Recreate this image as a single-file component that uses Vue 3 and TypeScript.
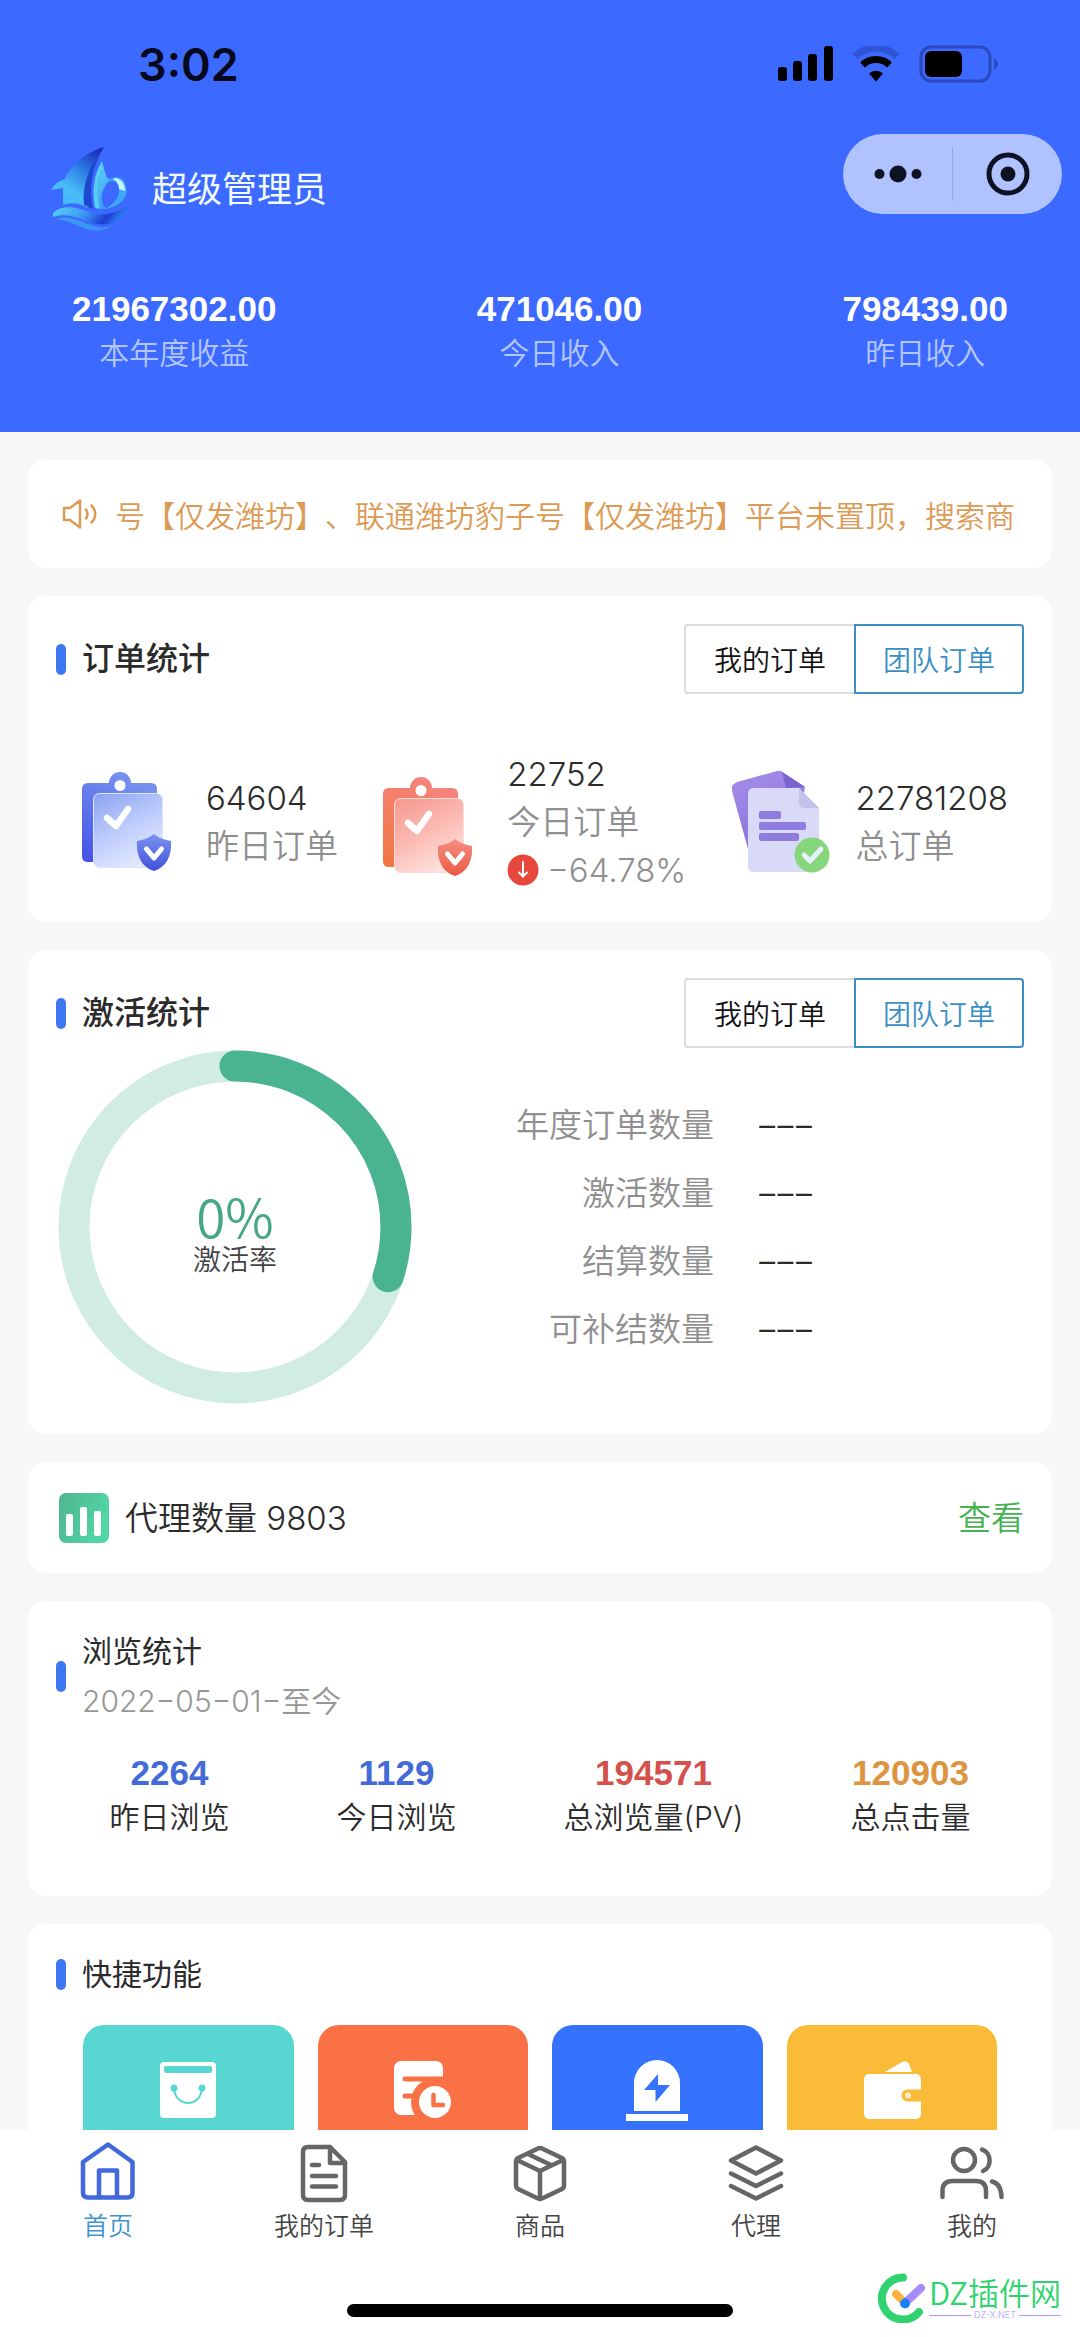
<script setup lang="ts">
import { ref } from 'vue'

interface Stat {
  label: string
  value: string
  tone?: string
}

const income: Stat[] = [
  { value: '21967302.00', label: '本年度收益' },
  { value: '471046.00', label: '今日收入' },
  { value: '798439.00', label: '昨日收入' },
]

const notice = '号【仅发潍坊】、联通潍坊豹子号【仅发潍坊】平台未置顶，搜索商'

const scopes: string[] = ['我的订单', '团队订单']
const orderScope = ref(1)
const activationScope = ref(1)

const activation: Stat[] = [
  { label: '年度订单数量', value: '−−−' },
  { label: '激活数量', value: '−−−' },
  { label: '结算数量', value: '−−−' },
  { label: '可补结数量', value: '−−−' },
]

const views: Stat[] = [
  { value: '2264', label: '昨日浏览', tone: 'blue' },
  { value: '1129', label: '今日浏览', tone: 'blue' },
  { value: '194571', label: '总浏览量(PV)', tone: 'red' },
  { value: '120903', label: '总点击量', tone: 'orange' },
]
</script>

<template>
  <div class="app">
    <header class="hero">
      <div class="status">
        <span class="clock">3:02</span>
        <div class="signals">
          <svg width="55" height="36" viewBox="0 0 55 36">
            <rect x="0" y="21" width="9" height="14" rx="3" />
            <rect x="15" y="15" width="9" height="20" rx="3" />
            <rect x="30" y="8" width="9" height="27" rx="3" />
            <rect x="46" y="0" width="9" height="35" rx="3" />
          </svg>
          <svg width="48" height="36" viewBox="0 0 48 36" fill="none">
            <path d="M3 10.500a30 30 0 0 1 42 0" stroke="#2f55d6" stroke-width="7" />
            <path d="M10.500 19a19.500 19.500 0 0 1 27 0" stroke="#000" stroke-width="7" />
            <path d="M17 27.500a10 10 0 0 1 14 0L24 35.500z" fill="#000" />
          </svg>
          <svg width="80" height="38" viewBox="0 0 80 38">
            <rect x="2" y="2" width="69" height="34" rx="10" fill="none" stroke="#2b49bb" stroke-width="3" />
            <rect x="6" y="6" width="37" height="26" rx="6" />
            <path d="M75 13c5 2 5 10 0 12z" fill="#2b49bb" />
          </svg>
        </div>
      </div>

      <div class="topline">
        <div class="brand">
          <svg class="logo" width="80" height="84" viewBox="0 0 80 84">
            <defs>
              <linearGradient id="sail" x1="0.9" y1="0" x2="0.3" y2="1">
                <stop offset="0" stop-color="#1b22b8" />
                <stop offset="0.4" stop-color="#2c7be4" />
                <stop offset="0.75" stop-color="#49bdf8" />
                <stop offset="1" stop-color="#45b8fb" />
              </linearGradient>
              <linearGradient id="jib" x1="0" y1="0" x2="0.4" y2="1">
                <stop offset="0" stop-color="#5ad2f5" />
                <stop offset="1" stop-color="#3b9cf6" />
              </linearGradient>
              <linearGradient id="wave" x1="0" y1="0" x2="1" y2="0.2">
                <stop offset="0" stop-color="#56d4f6" />
                <stop offset="0.5" stop-color="#3a93f4" />
                <stop offset="0.8" stop-color="#1c3fd2" />
                <stop offset="1" stop-color="#2f80f0" />
              </linearGradient>
            </defs>
            <path d="M53 0C36 5 20 17 14 32C8 34 3 37 0 43L12 41V58C21 55 29 56 37 61C34 40 42 17 53 0Z" fill="url(#sail)" />
            <path d="M52 2C38 18 31 38 33 58L42 62C38 40 40 22 52 2Z" fill="#1d48d0" />
            <path d="M51 14C42 28 41 46 44 61L50 62C45 48 46 30 53 22Z" fill="#57cdf6" />
            <path d="M53 22L56 31C62 31 55 36 52 44C49 52 51 58 56 62L49 62C45 48 46 32 53 22Z" fill="url(#jib)" />
            <path d="M56 36C60 29 70 28 74 36C80 49 69 60 54 62C64 56 71 48 67 38C65 33 60 33 56 36Z" fill="#3fa9f8" />
            <path d="M64 31C69 31 74 36 74 44L68 42C68 38 66 34 62 32Z" fill="#c4f5fb" />
            <path d="M2 66C12 57 26 60 38 65C52 70 64 66 77 60C72 74 60 79 46 77C32 75 20 64 2 70Z" fill="url(#wave)" />
            <path d="M4 72C20 67 30 75 42 79C49 81 58 81 63 78C52 86 38 84 30 80C20 76 12 72 4 72Z" fill="#3a97f6" />
          </svg>
          <h1>超级管理员</h1>
        </div>
        <div class="capsule">
          <button type="button" aria-label="更多">
            <svg width="48" height="18" viewBox="0 0 48 18">
              <circle cx="5.500" cy="9" r="5" /><circle cx="24" cy="9" r="8.500" /><circle cx="42.500" cy="9" r="5" />
            </svg>
          </button>
          <button type="button" aria-label="关闭">
            <svg width="44" height="44" viewBox="0 0 44 44">
              <circle cx="22" cy="22" r="19" fill="none" stroke="#0d1324" stroke-width="5" /><circle cx="22" cy="22" r="7.500" />
            </svg>
          </button>
        </div>
      </div>

      <div class="income">
        <div v-for="item in income" :key="item.label">
          <strong>{{ item.value }}</strong>
          <span>{{ item.label }}</span>
        </div>
      </div>
    </header>

    <main>
      <section class="card notice">
        <svg width="36" height="32" viewBox="0 0 36 32" fill="none" stroke="#dc9a55" stroke-width="2.500" stroke-linejoin="round" stroke-linecap="round">
          <path d="M2 10h6L18 2.500v27L8 22H2z" />
          <path d="M24 11.500c2 3 2 6 0 9M29.500 7.500c5 5 5 12 0 17" />
        </svg>
        <p>{{ notice }}</p>
      </section>

      <section class="card orders">
        <div class="card-head">
          <h2 class="strong">订单统计</h2>
          <div class="segment">
            <button v-for="(name, i) in scopes" :key="name" type="button" :class="{ on: orderScope === i }" @click="orderScope = i">{{ name }}</button>
          </div>
        </div>
        <div class="order-row">
          <div class="order">
            <svg width="98" height="100" viewBox="0 0 98 100">
              <defs>
                <linearGradient id="bBack" x1="0.4" y1="0" x2="0" y2="1"><stop offset="0" stop-color="#7590ee" /><stop offset="1" stop-color="#4450e6" /></linearGradient>
                <linearGradient id="bFront" x1="0.1" y1="0" x2="0.6" y2="1"><stop offset="0" stop-color="#8fa5f2" /><stop offset="0.5" stop-color="#bccbfc" /><stop offset="1" stop-color="#e3e9ff" /></linearGradient>
                <linearGradient id="bShield" x1="0" y1="0" x2="0" y2="1"><stop offset="0" stop-color="#7c93ee" /><stop offset="1" stop-color="#3f51dd" /></linearGradient>
              </defs>
              <path d="M6 11H27a11 11 0 0 1 22 0H69q6 0 6 6V90H6q-6 0-6-6V17q0-6 6-6Z" fill="url(#bBack)" />
              <circle cx="38" cy="13.500" r="5.500" fill="#fff" />
              <rect x="11.500" y="21.500" width="69" height="74" rx="6" fill="url(#bFront)" stroke="#dfe6ff" />
              <path d="M25 46l9 8 12-17" fill="none" stroke="#fff" stroke-width="6.500" stroke-linecap="round" stroke-linejoin="round" />
              <path d="M72 62C77 66 83 68 89 69C90 83 85 95 72 99C59 95 54 83 55 69C61 68 67 66 72 62Z" fill="url(#bShield)" />
              <path d="M64.500 77l7.500 9 7.500-9" fill="none" stroke="#fff" stroke-width="5" stroke-linecap="round" stroke-linejoin="round" />
            </svg>
            <div class="order-text"><b>64604</b><span>昨日订单</span></div>
          </div>
          <div class="order">
            <svg width="98" height="110" viewBox="0 -10 98 110">
              <defs>
                <linearGradient id="rBack" x1="0.4" y1="0" x2="0" y2="1"><stop offset="0" stop-color="#f5837a" /><stop offset="1" stop-color="#f0763f" /></linearGradient>
                <linearGradient id="rFront" x1="0.1" y1="0" x2="0.6" y2="1"><stop offset="0" stop-color="#f69a90" /><stop offset="0.5" stop-color="#fbb9b2" /><stop offset="1" stop-color="#ffe2dd" /></linearGradient>
                <linearGradient id="rShield" x1="0" y1="0" x2="0" y2="1"><stop offset="0" stop-color="#f78d84" /><stop offset="1" stop-color="#ea5a44" /></linearGradient>
              </defs>
              <path d="M6 11H27a11 11 0 0 1 22 0H69q6 0 6 6V90H6q-6 0-6-6V17q0-6 6-6Z" fill="url(#rBack)" />
              <circle cx="38" cy="13.500" r="5.500" fill="#fff" />
              <rect x="11.500" y="21.500" width="69" height="74" rx="6" fill="url(#rFront)" stroke="#ffdcd7" />
              <path d="M25 46l9 8 12-17" fill="none" stroke="#fff" stroke-width="6.500" stroke-linecap="round" stroke-linejoin="round" />
              <path d="M72 62C77 66 83 68 89 69C90 83 85 95 72 99C59 95 54 83 55 69C61 68 67 66 72 62Z" fill="url(#rShield)" />
              <path d="M64.500 77l7.500 9 7.500-9" fill="none" stroke="#fff" stroke-width="5" stroke-linecap="round" stroke-linejoin="round" />
            </svg>
            <div class="order-text">
              <b>22752</b>
              <span>今日订单</span>
              <span class="trend">
                <svg width="32" height="32" viewBox="0 0 32 32">
                  <circle cx="16" cy="16" r="15.500" fill="#e8483b" />
                  <path d="M16 8v14M12 18.500l4 4 4-4" fill="none" stroke="#fff" stroke-width="2" stroke-linecap="round" />
                </svg>
                −64.78%
              </span>
            </div>
          </div>
          <div class="order">
            <svg width="98" height="104" viewBox="0 0 98 104">
              <defs>
                <linearGradient id="pBack" x1="0" y1="0" x2="0.3" y2="1"><stop offset="0" stop-color="#a58de8" /><stop offset="1" stop-color="#8672dc" /></linearGradient>
              </defs>
              <path d="M5 12L45 1Q49 0 52 3L73 17L60 92L16 79L0 21Q-2 15 5 12Z" fill="url(#pBack)" />
              <path d="M50 2L54 18L73 17Z" fill="#7a62cf" />
              <path d="M22 18H67L87 38V96Q87 102 81 102H22Q16 102 16 96V24Q16 18 22 18Z" fill="#d8daf8" />
              <path d="M67 18V32Q67 38 73 38H87Z" fill="#c3c3ea" />
              <rect x="27" y="41" width="22" height="8" rx="2" fill="#8f7ce0" />
              <rect x="27" y="52" width="47" height="8" rx="2" fill="#8f7ce0" />
              <rect x="27" y="63" width="40" height="8" rx="2" fill="#8f7ce0" />
              <circle cx="80" cy="85" r="17.500" fill="#86d67c" />
              <path d="M72 85l6 6 11-12" fill="none" stroke="#e8f0fb" stroke-width="5" stroke-linecap="round" stroke-linejoin="round" />
            </svg>
            <div class="order-text"><b>22781208</b><span>总订单</span></div>
          </div>
        </div>
      </section>

      <section class="card activation">
        <div class="card-head">
          <h2 class="strong">激活统计</h2>
          <div class="segment">
            <button v-for="(name, i) in scopes" :key="name" type="button" :class="{ on: activationScope === i }" @click="activationScope = i">{{ name }}</button>
          </div>
        </div>
        <div class="activation-row">
          <div class="gauge">
            <svg width="354" height="354" viewBox="0 0 354 354" fill="none" stroke-width="31">
              <circle cx="177" cy="177" r="161" stroke="#d0ece4" />
              <circle cx="177" cy="177" r="161" stroke="#49b392" stroke-linecap="round" pathLength="100" stroke-dasharray="30 100" transform="rotate(-90 177 177)" />
            </svg>
            <div class="gauge-text"><b>0%</b><span>激活率</span></div>
          </div>
          <dl>
            <div v-for="item in activation" :key="item.label">
              <dt>{{ item.label }}</dt>
              <dd>{{ item.value }}</dd>
            </div>
          </dl>
        </div>
      </section>

      <section class="card agents">
        <svg width="50" height="50" viewBox="0 0 50 50">
          <defs>
            <linearGradient id="chart" x1="0" y1="0" x2="1" y2="0.4"><stop offset="0" stop-color="#4fb48f" /><stop offset="1" stop-color="#52d6a4" /></linearGradient>
          </defs>
          <rect width="50" height="50" rx="7" fill="url(#chart)" />
          <g fill="#fff"><rect x="7" y="21" width="7" height="22" rx="2" /><rect x="21" y="14" width="7" height="29" rx="2" /><rect x="35" y="18" width="7" height="25" rx="2" /></g>
        </svg>
        <span>代理数量 9803</span>
        <a href="#agents">查看</a>
      </section>

      <section class="card views">
        <div class="card-head">
          <div class="titled">
            <h2>浏览统计</h2>
            <p>2022−05−01−至今</p>
          </div>
        </div>
        <div class="views-row">
          <div v-for="item in views" :key="item.label">
            <strong :class="item.tone">{{ item.value }}</strong>
            <span>{{ item.label }}</span>
          </div>
        </div>
      </section>

      <section class="card quick">
        <div class="card-head"><h2>快捷功能</h2></div>
        <div class="tiles">
          <a href="#shop" class="tile teal" aria-label="商城">
            <svg width="60" height="62" viewBox="0 0 60 62">
              <rect x="2" y="2" width="56" height="56" rx="4" fill="#fff" />
              <rect x="6" y="6" width="48" height="7" rx="2" fill="#57d6d2" />
              <g fill="#57d6d2"><circle cx="16" cy="28" r="3.500" /><circle cx="44" cy="28" r="3.500" /></g>
              <path d="M16 28c1 20 27 20 28 0" fill="none" stroke="#57d6d2" stroke-width="2" />
            </svg>
          </a>
          <a href="#history" class="tile coral" aria-label="订单记录">
            <svg width="60" height="62" viewBox="0 0 60 62">
              <rect x="1" y="1" width="49" height="54" rx="7" fill="#fff" />
              <path d="M12 19H52M12 36H20" stroke="#fa7145" stroke-width="5" stroke-linecap="round" />
              <circle cx="42" cy="42" r="24" fill="#fa7145" />
              <circle cx="42" cy="42" r="16" fill="#fff" />
              <path d="M40.500 35v10H50" fill="none" stroke="#fa7145" stroke-width="4.500" stroke-linecap="round" stroke-linejoin="round" />
            </svg>
          </a>
          <a href="#alerts" class="tile azure" aria-label="预警">
            <svg width="62" height="62" viewBox="-1 0 62 62">
              <path d="M7 51V23a23 23 0 0 1 46 0V51Z" fill="#fff" />
              <rect x="-1" y="54" width="62" height="7" fill="#fff" />
              <path d="M31 14L17 30H28.500V42L43 25H31Z" fill="#3573fe" />
            </svg>
          </a>
          <a href="#wallet" class="tile amber" aria-label="钱包">
            <svg width="60" height="62" viewBox="0 0 60 62">
              <path d="M23 12L40 2Q45 0 47 4L50 12Z" fill="#fff" />
              <rect x="2" y="14" width="57" height="45" rx="5" fill="#fff" />
              <path d="M60 30.500H45.500a5 5 0 0 0 0 10H60" fill="#f9bb38" stroke="#f9bb38" stroke-width="2" />
              <circle cx="46" cy="35.500" r="3" fill="#fff0cc" />
            </svg>
          </a>
        </div>
      </section>
    </main>

    <footer>
      <nav>
        <a href="#home" class="current">
          <svg class="tab-icon" width="64" height="62" viewBox="0 0 64 62">
            <path d="M32 2.500L56.500 20V50.500q0 5-5 5H12q-5 0-5-5V20Z" /><path d="M23 55V28.500H41V55" />
          </svg>
          <span>首页</span>
        </a>
        <a href="#orders">
          <svg class="tab-icon" width="64" height="62" viewBox="0 0 64 62">
            <path d="M38 5H16q-5 0-5 5V53q0 5 5 5H48q5 0 5-5V20Z" /><path d="M38 5V21H53M20 23H27M20 34H44M20 44.500H44" />
          </svg>
          <span>我的订单</span>
        </a>
        <a href="#goods">
          <svg class="tab-icon" width="64" height="62" viewBox="0 0 64 62">
            <path d="M29 7Q32 5 35 7L54 16Q56 17 56 20V43Q56 46 54 47L35 56Q32 58 29 56L10 47Q8 46 8 43V20Q8 17 10 16Z" />
            <path d="M9 18L32 29L55 18M32 29V57M20 12L43 23" />
          </svg>
          <span>商品</span>
        </a>
        <a href="#agent">
          <svg class="tab-icon" width="64" height="62" viewBox="0 0 64 62">
            <path d="M32 5.500L57 18.500L32 31.500L7 18.500Z" /><path d="M7 31.500L32 44L57 31.500M7 44L32 56.500L57 44" />
          </svg>
          <span>代理</span>
        </a>
        <a href="#mine">
          <svg class="tab-icon" width="64" height="62" viewBox="0 0 64 62">
            <circle cx="24" cy="18" r="11" />
            <path d="M42 7.500c10 3 10 18 1 21.500M2.500 55V49q0-10 10-10H36q10 0 10 10V55M52 39.500q9 2 9.500 15.500" />
          </svg>
          <span>我的</span>
        </a>
      </nav>
      <div class="home-bar"></div>
      <div class="watermark">
        <svg width="48" height="50" viewBox="0 0 48 50" fill="none" stroke-linecap="round">
          <path d="M25 4.500A21 21 0 1 0 41 39" stroke="#2fd470" stroke-width="8" />
          <path d="M18 21l9 9" stroke="#ffb13d" stroke-width="8" />
          <path d="M43 15L27 30" stroke="#a78bfa" stroke-width="8" />
          <circle cx="27" cy="30.500" r="5" fill="#1683f5" />
        </svg>
        <div>
          <b>DZ插件网</b>
          <small>DZ-X.NET</small>
        </div>
      </div>
    </footer>
  </div>
</template>

<style>
body {
  margin: 0;
  background: #fff;
}
</style>

<style scoped>
.app {
  display: flex;
  flex-direction: column;
  height: 100vh;
  overflow: hidden;
  background: #f7f7f7;
  color: #2b2b2b;
  font-family: "Inter", "Noto Sans CJK SC", sans-serif;
  font-weight: 350;
}
h1, h2, p, dl, dd {
  margin: 0;
  font-weight: inherit;
}
svg {
  display: block;
  flex: none;
}
a {
  color: inherit;
  text-decoration: none;
}
button {
  padding: 0;
  border: 0;
  background: none;
  font: inherit;
  color: inherit;
}

.hero {
  flex: none;
  background: #3c69ff;
  padding-bottom: 57px;
}
.status {
  display: flex;
  align-items: center;
  justify-content: space-between;
  height: 128px;
  padding: 0 81px 0 138px;
}
.clock {
  color: #06091c;
  font-size: 45px;
  font-weight: 600;
}
.signals {
  display: flex;
  align-items: center;
  gap: 19px;
}
.topline {
  display: flex;
  align-items: flex-start;
  justify-content: space-between;
  padding: 6px 18px 0 51px;
}
.brand {
  display: flex;
  align-items: center;
  gap: 21px;
  padding-top: 13px;
}
.brand h1 {
  color: #f2fbff;
  font-size: 35px;
  line-height: 48px;
  font-weight: 400;
}
.capsule {
  display: flex;
  align-items: center;
  height: 80px;
  width: 219px;
  border-radius: 40px;
  background: #b1c3ff;
}
.capsule button {
  display: flex;
  flex: 1;
  align-items: center;
  justify-content: center;
  height: 54px;
}
.capsule button + button {
  border-left: 1px solid #95a9ee;
}
.capsule circle {
  fill: #0d1324;
}
.capsule circle[fill="none"] {
  fill: none;
}
.income {
  display: flex;
  justify-content: space-between;
  padding: 0 72px;
  margin-top: 56px;
  text-align: center;
}
.income strong,
.income span,
.views-row strong,
.views-row span {
  display: block;
  line-height: 44px;
}
.income strong,
.views-row strong {
  font-family: "Liberation Sans", sans-serif;
  font-size: 35px;
  font-weight: 700;
}
.income strong {
  color: #fff;
}
.income span {
  color: #b3c6ff;
  font-size: 30px;
}

main {
  display: flex;
  flex: 1;
  flex-direction: column;
  gap: 28px;
  min-height: 0;
  overflow: hidden;
  padding: 28px 28px 0;
}
.card {
  flex: none;
  border-radius: 18px;
  background: #fff;
}
.notice {
  display: flex;
  align-items: center;
  gap: 17px;
  height: 108px;
  padding: 0 28px 0 34px;
  overflow: hidden;
  color: #dc9a55;
}
.notice p {
  font-size: 30px;
  line-height: 44px;
  white-space: nowrap;
  font-family: "Noto Sans CJK SC", sans-serif;
  text-spacing-trim: space-all;
}
.card-head {
  display: flex;
  align-items: center;
  padding: 0 28px;
}
.card-head::before {
  content: "";
  width: 10px;
  height: 31px;
  margin-right: 16px;
  border-radius: 5px;
  background: #3d78f2;
}
.card-head h2 {
  font-size: 30px;
  line-height: 50px;
  font-weight: 400;
}
.card-head h2.strong {
  font-size: 32px;
  font-weight: 500;
}
.segment {
  display: flex;
  margin-left: auto;
}
.segment button {
  box-sizing: border-box;
  width: 170px;
  height: 70px;
  border: 2px solid #dcdcdc;
  color: #111;
  font-size: 28px;
}
.segment button:first-child {
  border-right: 0;
  border-radius: 4px 0 0 4px;
}
.segment button:last-child {
  border-radius: 0 4px 4px 0;
}
.segment button.on {
  border: 2px solid #3b8fc4;
  color: #3b8fc4;
}

.orders,
.activation {
  padding-top: 28px;
}
.order-row {
  display: flex;
  align-items: center;
  justify-content: space-between;
  padding: 56px 44px 28px 54px;
}
.order {
  display: flex;
  align-items: center;
  gap: 26px;
}
.order-text {
  display: flex;
  flex-direction: column;
  font-size: 33px;
  line-height: 48px;
  color: #8f8f8f;
}
.order-text b {
  color: #2b2b2b;
  font-weight: inherit;
}
.trend {
  display: flex;
  align-items: center;
  gap: 8px;
}

.activation-row {
  display: flex;
  align-items: center;
  padding: 2px 28px 30px 30px;
}
.gauge {
  display: grid;
  place-items: center;
}
.gauge > * {
  grid-area: 1 / 1;
}
.gauge-text {
  display: flex;
  flex-direction: column;
  align-items: center;
  padding-top: 8px;
  color: #444;
  font-size: 28px;
  line-height: 32px;
}
.gauge-text b {
  color: #45a785;
  font-family: "Noto Sans CJK SC", sans-serif;
  font-size: 53px;
  line-height: 58px;
  font-weight: inherit;
}
dl {
  flex: 1;
}
dl div {
  display: flex;
  gap: 44px;
  font-size: 33px;
  line-height: 68px;
}
dt {
  width: 302px;
  text-align: right;
  color: #8f8f8f;
}
dd {
  font-family: "Noto Sans CJK SC", sans-serif;
  font-weight: 400;
}

.agents {
  display: flex;
  align-items: center;
  gap: 16px;
  height: 111px;
  padding: 0 28px 0 31px;
  font-size: 33px;
  line-height: 48px;
}
.agents a {
  margin-left: auto;
  color: #45b251;
}

.views {
  padding: 25px 0 57px;
}
.titled p {
  color: #969696;
  font-size: 30px;
  line-height: 50px;
}
.views-row {
  display: flex;
  justify-content: space-around;
  padding: 25px 28px 0;
  text-align: center;
}
.views-row span {
  font-size: 30px;
}
.blue {
  color: #426bd8;
}
.red {
  color: #d5514b;
}
.orange {
  color: #dd9440;
}

.quick {
  padding-top: 25px;
}
.tiles {
  display: grid;
  grid-template-columns: repeat(4, 1fr);
  gap: 24px;
  padding: 26px 55px 28px;
}
.tile {
  display: flex;
  justify-content: center;
  height: 140px;
  padding-top: 35px;
  border-radius: 21px;
}
.teal {
  background: #57d6d2;
}
.coral {
  background: #fa7145;
}
.azure {
  background: #3573fe;
}
.amber {
  background: #f9bb38;
}

footer {
  position: relative;
  flex: none;
  background: #fff;
  padding: 12px 0 20px;
}
nav {
  display: grid;
  grid-template-columns: repeat(5, 1fr);
}
nav a {
  display: flex;
  flex-direction: column;
  align-items: center;
  gap: 6px;
  color: #444;
  font-size: 25px;
  line-height: 32px;
}
.tab-icon {
  fill: none;
  stroke: #666;
  stroke-width: 4.5px;
  stroke-linecap: round;
  stroke-linejoin: round;
}
.current {
  color: #3f93cf;
}
.current .tab-icon {
  stroke: #4169dc;
}
.home-bar {
  width: 386px;
  height: 13px;
  margin: 62px auto 0;
  border-radius: 7px;
  background: #000;
}
.watermark {
  position: absolute;
  right: 19px;
  bottom: 14px;
  display: flex;
  align-items: center;
  gap: 3px;
}
.watermark b,
.watermark small {
  display: flex;
  align-items: center;
  white-space: nowrap;
}
.watermark b {
  color: #2fd470;
  font-family: "Noto Sans CJK SC", sans-serif;
  font-size: 31px;
  line-height: 34px;
  font-weight: inherit;
}
.watermark small {
  gap: 3px;
  color: #a99af5;
  font-size: 9px;
  line-height: 12px;
}
.watermark small::before,
.watermark small::after {
  content: "";
  flex: 1;
  height: 1px;
  background: #a99af5;
}
</style>
